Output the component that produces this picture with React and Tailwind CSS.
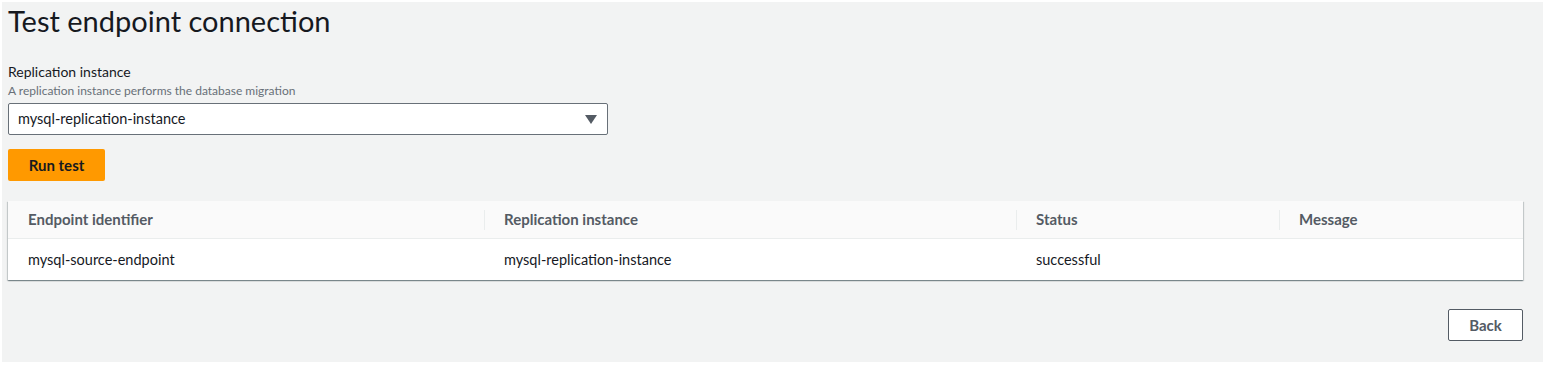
export default function App() {
  const cols = [
    { label: 'Endpoint identifier', w: 'w-[476px]', value: 'mysql-source-endpoint' },
    { label: 'Replication instance', w: 'w-[532px]', value: 'mysql-replication-instance' },
    { label: 'Status', w: 'w-[263px]', value: 'successful' },
    { label: 'Message', w: 'flex-1', value: '' },
  ]

  return (
    <div className="w-[1546px] h-[365px] bg-white pt-[2px] pl-[2px] pr-[3px] pb-[3px] font-['Lato','Liberation_Sans',sans-serif] text-[#16191f]">
      <div className="h-full bg-[#f2f3f3] pl-[6px] pr-[20px] flex flex-col">
        <h1 className="text-[29px] leading-[36px] mt-[1px] font-normal">Test endpoint connection</h1>

        <div className="mt-[24px] text-[14px] leading-[18px]">Replication instance</div>
        <div className="text-[12px] leading-[16px] text-[#687078] mt-[2px]">A replication instance performs the database migration</div>

        <div className="mt-[4px] w-[600px] h-[32px] bg-white border border-[#687078] rounded-[2px] flex items-center justify-between pl-[9px] pr-[10px]">
          <span className="text-[14.5px]">mysql-replication-instance</span>
          <svg width="12" height="9" viewBox="0 0 12 9"><path d="M0 0h12L6 9z" fill="#545b64" /></svg>
        </div>

        <button className="mt-[14px] self-start h-[32px] w-[97px] bg-[#ff9900] rounded-[2px] text-[15px] font-bold text-[#16191f]">Run test</button>

        <div className="mt-[20px] bg-white shadow-[0_1px_1px_0_rgba(0,28,36,0.3),1px_1px_1px_0_rgba(0,28,36,0.15),-1px_1px_1px_0_rgba(0,28,36,0.15)]">
          <div className="flex h-[38px] bg-[#fafafa] border-b border-[#eaeded]">
            {cols.map((c, i) => (
              <div key={c.label} className={`${c.w} flex items-center relative pl-[20px] text-[15px] font-bold text-[#545b64]`}>
                {i > 0 && <span className="absolute left-0 top-[9px] h-[20px] w-px bg-[#eaeded]" />}
                {c.label}
              </div>
            ))}
          </div>
          <div className="flex h-[41px]">
            {cols.map((c) => (
              <div key={c.label} className={`${c.w} flex items-center pl-[20px] text-[14.5px]`}>{c.value}</div>
            ))}
          </div>
        </div>

        <div className="flex justify-end mt-[29px]">
          <button className="h-[32px] w-[75px] bg-white border border-[#545b64] rounded-[2px] text-[15px] font-bold text-[#545b64]">Back</button>
        </div>
      </div>
    </div>
  )
}
